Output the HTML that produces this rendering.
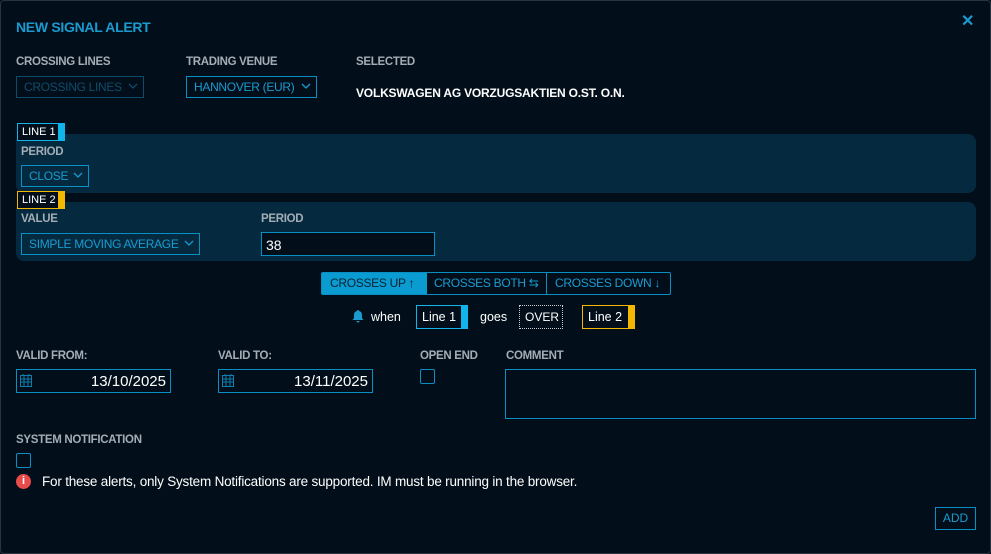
<!DOCTYPE html>
<html><head><meta charset="utf-8"><style>
*{box-sizing:border-box;margin:0;padding:0}
body{width:991px;height:554px;background:#020f1a;font-family:"Liberation Sans",sans-serif;overflow:hidden;position:relative;color:#fff}
.frame{position:absolute;left:0;top:0;width:991px;height:554px;border:1px solid #2a3440;border-radius:4px}
.a{position:absolute;white-space:nowrap}
.lbl{font-size:11.5px;font-weight:bold;color:#a4adb5;letter-spacing:-0.3px}
.sel{position:absolute;border:1px solid #0a8fc4;font-size:12px;color:#1a9bd0;padding:0 0 0 7px;line-height:20px;height:22px;letter-spacing:-0.3px}
.sel svg{position:absolute;right:5px;top:6px}
.panel{position:absolute;left:16px;width:960px;background:#052a3f;border-radius:8px}
.tag{position:absolute;height:18px;border:1px solid;background:#020f1a;font-size:11px;color:#fff;line-height:16px;padding-left:4px;width:48px}
.tag i{position:absolute;right:0;top:0;bottom:0;width:6px}
.inp{position:absolute;border:1px solid #0a8fc4;background:#020f1a;font-size:13px;color:#fff}
.cb{position:absolute;width:15px;height:15px;border:1px solid #0a8fc4;border-radius:2px}
</style></head><body>
<div class="frame"></div>
<div class="a" style="left:16px;top:19px;font-size:14px;font-weight:bold;color:#1a9bd0;letter-spacing:-0.3px">NEW SIGNAL ALERT</div>
<div class="a" style="left:961px;top:11px;font-size:16px;font-weight:bold;color:#1a9bd0">✕</div>

<div class="a lbl" style="left:16px;top:56px">CROSSING LINES</div>
<div class="sel" style="left:16px;top:76px;width:128px;color:#0f4c69;border-color:#0f4c69">CROSSING LINES<svg width="10" height="7"><path d="M1 1l4 4 4-4" stroke="#0f4c69" fill="none" stroke-width="1.3"/></svg></div>
<div class="a lbl" style="left:186px;top:56px">TRADING VENUE</div>
<div class="sel" style="left:186px;top:76px;width:131px">HANNOVER (EUR)<svg width="10" height="7"><path d="M1 1l4 4 4-4" stroke="#1a9bd0" fill="none" stroke-width="1.3"/></svg></div>
<div class="a lbl" style="left:356px;top:56px">SELECTED</div>
<div class="a" style="left:356px;top:86px;font-size:12px;font-weight:bold;letter-spacing:-0.2px">VOLKSWAGEN AG VORZUGSAKTIEN O.ST. O.N.</div>

<div class="panel" style="top:134px;height:59px"></div>
<div class="tag" style="left:17px;top:123px;border-color:#12b5ea">LINE 1<i style="background:#12b5ea"></i></div>
<div class="a lbl" style="left:21px;top:146px">PERIOD</div>
<div class="sel" style="left:21px;top:165px;width:68px">CLOSE<svg width="10" height="7"><path d="M1 1l4 4 4-4" stroke="#1a9bd0" fill="none" stroke-width="1.3"/></svg></div>

<div class="panel" style="top:202px;height:59px"></div>
<div class="tag" style="left:17px;top:191px;border-color:#f5b800">LINE 2<i style="background:#f5b800"></i></div>
<div class="a lbl" style="left:21px;top:213px">VALUE</div>
<div class="sel" style="left:21px;top:233px;width:179px">SIMPLE MOVING AVERAGE<svg width="10" height="7"><path d="M1 1l4 4 4-4" stroke="#1a9bd0" fill="none" stroke-width="1.3"/></svg></div>
<div class="a lbl" style="left:261px;top:213px">PERIOD</div>
<div class="inp" style="left:261px;top:232px;width:174px;height:24px;padding:4px 4px;font-size:14px">38</div>

<div class="a" style="left:321px;top:272px;width:350px;height:23px;border:1px solid #0a8fc4;border-radius:2px;font-size:12px;letter-spacing:-0.3px;line-height:21px;color:#1a9bd0">
 <span style="position:absolute;left:0;top:0;width:105px;height:21px;background:#0a9bd0;color:#062233;padding-left:8px">CROSSES UP ↑</span>
 <span style="position:absolute;left:112px">CROSSES BOTH ⇆</span>
 <span style="position:absolute;left:224px;top:0;height:21px;border-left:1px solid #0a8fc4;padding-left:8px">CROSSES DOWN ↓</span>
</div>
<svg class="a" style="left:351px;top:309px" width="14" height="14" viewBox="0 0 14 14"><path d="M7 1a1 1 0 0 1 1 1 4 4 0 0 1 3 4v3l1.5 2h-11L3 9V6a4 4 0 0 1 3-4 1 1 0 0 1 1-1zM5.5 12h3a1.5 1.5 0 0 1-3 0z" fill="#1a9bd0"/></svg>
<div class="a" style="left:371px;top:310px;font-size:12.5px">when</div>
<div class="a" style="left:416px;top:305px;width:52px;height:24px;border:1px solid #12b5ea;font-size:12.5px;line-height:22px;padding-left:5px">Line 1<i style="position:absolute;right:0;top:0;bottom:0;width:6px;background:#12b5ea"></i></div>
<div class="a" style="left:480px;top:310px;font-size:12.5px">goes</div>
<div class="a" style="left:519px;top:305px;width:44px;height:24px;border:1px dotted #ccc;font-size:12px;line-height:22px;padding-left:5px">OVER</div>
<div class="a" style="left:582px;top:305px;width:53px;height:24px;border:1px solid #f5b800;font-size:12.5px;line-height:22px;padding-left:5px">Line 2<i style="position:absolute;right:0;top:0;bottom:0;width:6px;background:#f5b800"></i></div>

<div class="a lbl" style="left:16px;top:350px">VALID FROM:</div>
<div class="inp" style="left:16px;top:369px;width:155px;height:24px;text-align:right;padding:3px 4px;font-size:15px">13/10/2025</div>
<svg class="a" style="left:20px;top:374px" width="12" height="13"><rect x="0.5" y="1.5" width="11" height="11" fill="none" stroke="#0a7fb0"/><path d="M0 5h12M0 8h12M4 2v11M8 2v11M3 0v2M9 0v2" stroke="#0a7fb0"/></svg>
<div class="a lbl" style="left:218px;top:350px">VALID TO:</div>
<div class="inp" style="left:218px;top:369px;width:155px;height:24px;text-align:right;padding:3px 4px;font-size:15px">13/11/2025</div>
<svg class="a" style="left:222px;top:374px" width="12" height="13"><rect x="0.5" y="1.5" width="11" height="11" fill="none" stroke="#0a7fb0"/><path d="M0 5h12M0 8h12M4 2v11M8 2v11M3 0v2M9 0v2" stroke="#0a7fb0"/></svg>
<div class="a lbl" style="left:420px;top:350px">OPEN END</div>
<div class="cb" style="left:420px;top:369px"></div>
<div class="a lbl" style="left:506px;top:350px">COMMENT</div>
<div class="inp" style="left:505px;top:369px;width:471px;height:50px"></div>

<div class="a lbl" style="left:16px;top:434px">SYSTEM NOTIFICATION</div>
<div class="cb" style="left:16px;top:453px"></div>
<div class="a" style="left:16px;top:474px;width:15px;height:15px;border-radius:50%;background:#e94b4b;color:#fff;font-size:11px;font-weight:bold;text-align:center;line-height:15px">i</div>
<div class="a" style="left:42px;top:474px;font-size:13.5px;letter-spacing:-0.2px">For these alerts, only System Notifications are supported. IM must be running in the browser.</div>

<div class="a" style="left:935px;top:507px;width:41px;height:23px;border:1px solid #0a8fc4;color:#1a9bd0;font-size:12px;text-align:center;line-height:21px">ADD</div>
</body></html>
